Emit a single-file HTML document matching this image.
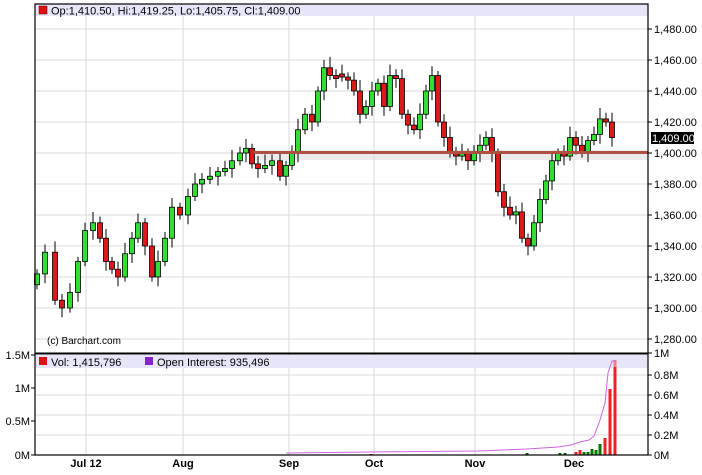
<!DOCTYPE html>
<html><head><meta charset="utf-8"><style>
body{margin:0;background:#fff;width:702px;height:470px;overflow:hidden;font-family:"Liberation Sans",sans-serif}
svg text{font-family:"Liberation Sans",sans-serif;font-size:11px;fill:#000}
</style></head><body>
<svg id="s" width="702" height="470" xmlns="http://www.w3.org/2000/svg">
<rect x="0" y="0" width="702" height="470" fill="#fff"/>
<g id="grid" stroke="#d8d8d8" stroke-width="1"></g>
<rect x="35" y="4" width="613" height="12" fill="#e6e6f8"/>
<rect x="39" y="6" width="8" height="8" fill="#dd1111" stroke="#600" stroke-width="0.5"/>
<text x="51" y="14.5">Op:1,410.50, Hi:1,419.25, Lo:1,405.75, Cl:1,409.00</text>
<rect x="254" y="150" width="394" height="10" fill="#ddd" opacity="0.6"/>
<g id="c"></g>
<rect x="254" y="151" width="394" height="3" fill="#b05040"/>
<text x="47" y="344" style="font-size:10px">(c) Barchart.com</text>
<rect x="35" y="355" width="613" height="13" fill="#e6e6f8"/>
<rect x="39" y="357" width="8" height="8" fill="#dd1111"/>
<text x="51" y="366">Vol: 1,415,796</text>
<rect x="145" y="357" width="8" height="8" fill="#8822cc"/>
<text x="157" y="366">Open Interest: 935,496</text>
<g id="v"></g>
<polyline fill="none" stroke="#cc66dd" stroke-width="1" points="286,453 371,452 478,451 527,449 558,447 571,445 580,442 589,440 594,436 600,420 605,403 608,373 612,361 616,361"/>
<rect x="35" y="4" width="613" height="451" fill="none" stroke="#000" stroke-width="1.2"/>
<line x1="35" y1="353.5" x2="648" y2="353.5" stroke="#000" stroke-width="2"/>
<g id="ax" stroke="#000"></g>
<rect x="651" y="132" width="43" height="12" fill="#000"/>
<text x="652" y="142" style="fill:#fff">1,409.00</text>
</svg>
<script>
var NS="http://www.w3.org/2000/svg";
function el(p,t,a,txt){var e=document.createElementNS(NS,t);for(var k in a)e.setAttribute(k,a[k]);if(txt)e.textContent=txt;document.getElementById(p).appendChild(e);return e;}
var vx=[86,183,289,374,475,574];
vx.forEach(function(x){el("grid","line",{x1:x,y1:16,x2:x,y2:455});});
function Y(p){return 29+(1480-p)*1.55;}
for(var p=1480;p>=1280;p-=20){var y=Y(p);el("grid","line",{x1:35,y1:y,x2:648,y2:y});el("ax","line",{x1:648,y1:y,x2:652,y2:y});
el("s","text",{x:654,y:y+4},(p/1000|0)+","+String(p%1000).padStart(3,"0")+".00");}
[[353,"1M"],[375,"0.8M"],[395,"0.6M"],[415,"0.4M"],[435,"0.2M"],[455,"0M"]].forEach(function(a){el("grid","line",{x1:35,y1:a[0],x2:648,y2:a[0]});el("ax","line",{x1:648,y1:a[0],x2:652,y2:a[0]});el("s","text",{x:654,y:a[0]+4},a[1]);});
[[355,"1.5M"],[388,"1M"],[421,"0.5M"],[455,"0M"]].forEach(function(a){el("ax","line",{x1:31,y1:a[0],x2:35,y2:a[0]});el("s","text",{x:30,y:a[0]+4,"text-anchor":"end"},a[1]);});
[[86,"Jul 12"],[183,"Aug"],[289,"Sep"],[374,"Oct"],[475,"Nov"],[574,"Dec"]].forEach(function(a){el("s","text",{x:a[0],y:467,"text-anchor":"middle","font-weight":"bold"},a[1]);});
var d=[[37,1322],[45,1336],[55,1305],[62,1300],[70,1310],[78,1330],[85,1350],[93,1355],[100,1345],[106,1330],[112,1325],[118,1320],[125,1335],[132,1345],[138,1355],[145,1340],[152,1320],[158,1330],[165,1345],[172,1365],[180,1360],[188,1372],[195,1380],[202,1383],[210,1385],[218,1388],[225,1390],[232,1395],[240,1400],[246,1403],[252,1393],[258,1390],[265,1392],[272,1395],[280,1385],[286,1392],[292,1400],[298,1415],[305,1425],[312,1420],[318,1440],[324,1455],[330,1450],[336,1448],[342,1449],[348,1447],[354,1440],[360,1425],[366,1430],[372,1440],[378,1445],[384,1430],[390,1450],[396,1448],[402,1425],[408,1418],[414,1415],[420,1425],[426,1440],[432,1450],[438,1420],[444,1410],[450,1400],[456,1398],[462,1400],[468,1395],[474,1400],[480,1405],[486,1410],[492,1400],[498,1375],[504,1365],[510,1360],[516,1362],[522,1345],[528,1340],[534,1355],[540,1370],[546,1382],[552,1395],[558,1400],[564,1398],[570,1410],[576,1405],[582,1400],[588,1408],[594,1412],[600,1422],[606,1420],[612,1410]];
for(var i=0;i<d.length;i++){var x=d[i][0],c=d[i][1],o=i?d[i-1][1]:1315;if(Math.abs(c-o)<1.5)o=c+2;
var hi=Math.max(o,c)+3+(i*7%5),lo=Math.min(o,c)-3-(i*3%6);
el("c","line",{x1:x,y1:Y(hi),x2:x,y2:Y(lo),stroke:"#000","stroke-width":1});
var up=c>o;el("c","rect",{x:x-2.5,y:Y(Math.max(o,c)),width:5,height:Math.max(1.5,Math.abs(o-c)*1.55),fill:up?"#33dd33":"#dd1a1a",stroke:"#000","stroke-width":0.8});}
var vb=[[371,454,"#c00"],[527,453,"#060"],[560,453,"#060"],[565,453,"#060"],[576,452,"#e22"],[580,450,"#e22"],[584,452,"#070"],[588,452,"#070"],[592,449,"#070"],[596,450,"#070"],[600,444,"#070"],[605,438,"#e22"],[610,389,"#e22"],[615,367,"#e22"]];
vb.forEach(function(b){el("v","rect",{x:b[0]-1.5,y:b[1],width:3,height:455-b[1],fill:b[2]});});
el("v","rect",{x:613.5,y:360,width:3,height:7,fill:"#f08080"});
</script>
</body></html>
